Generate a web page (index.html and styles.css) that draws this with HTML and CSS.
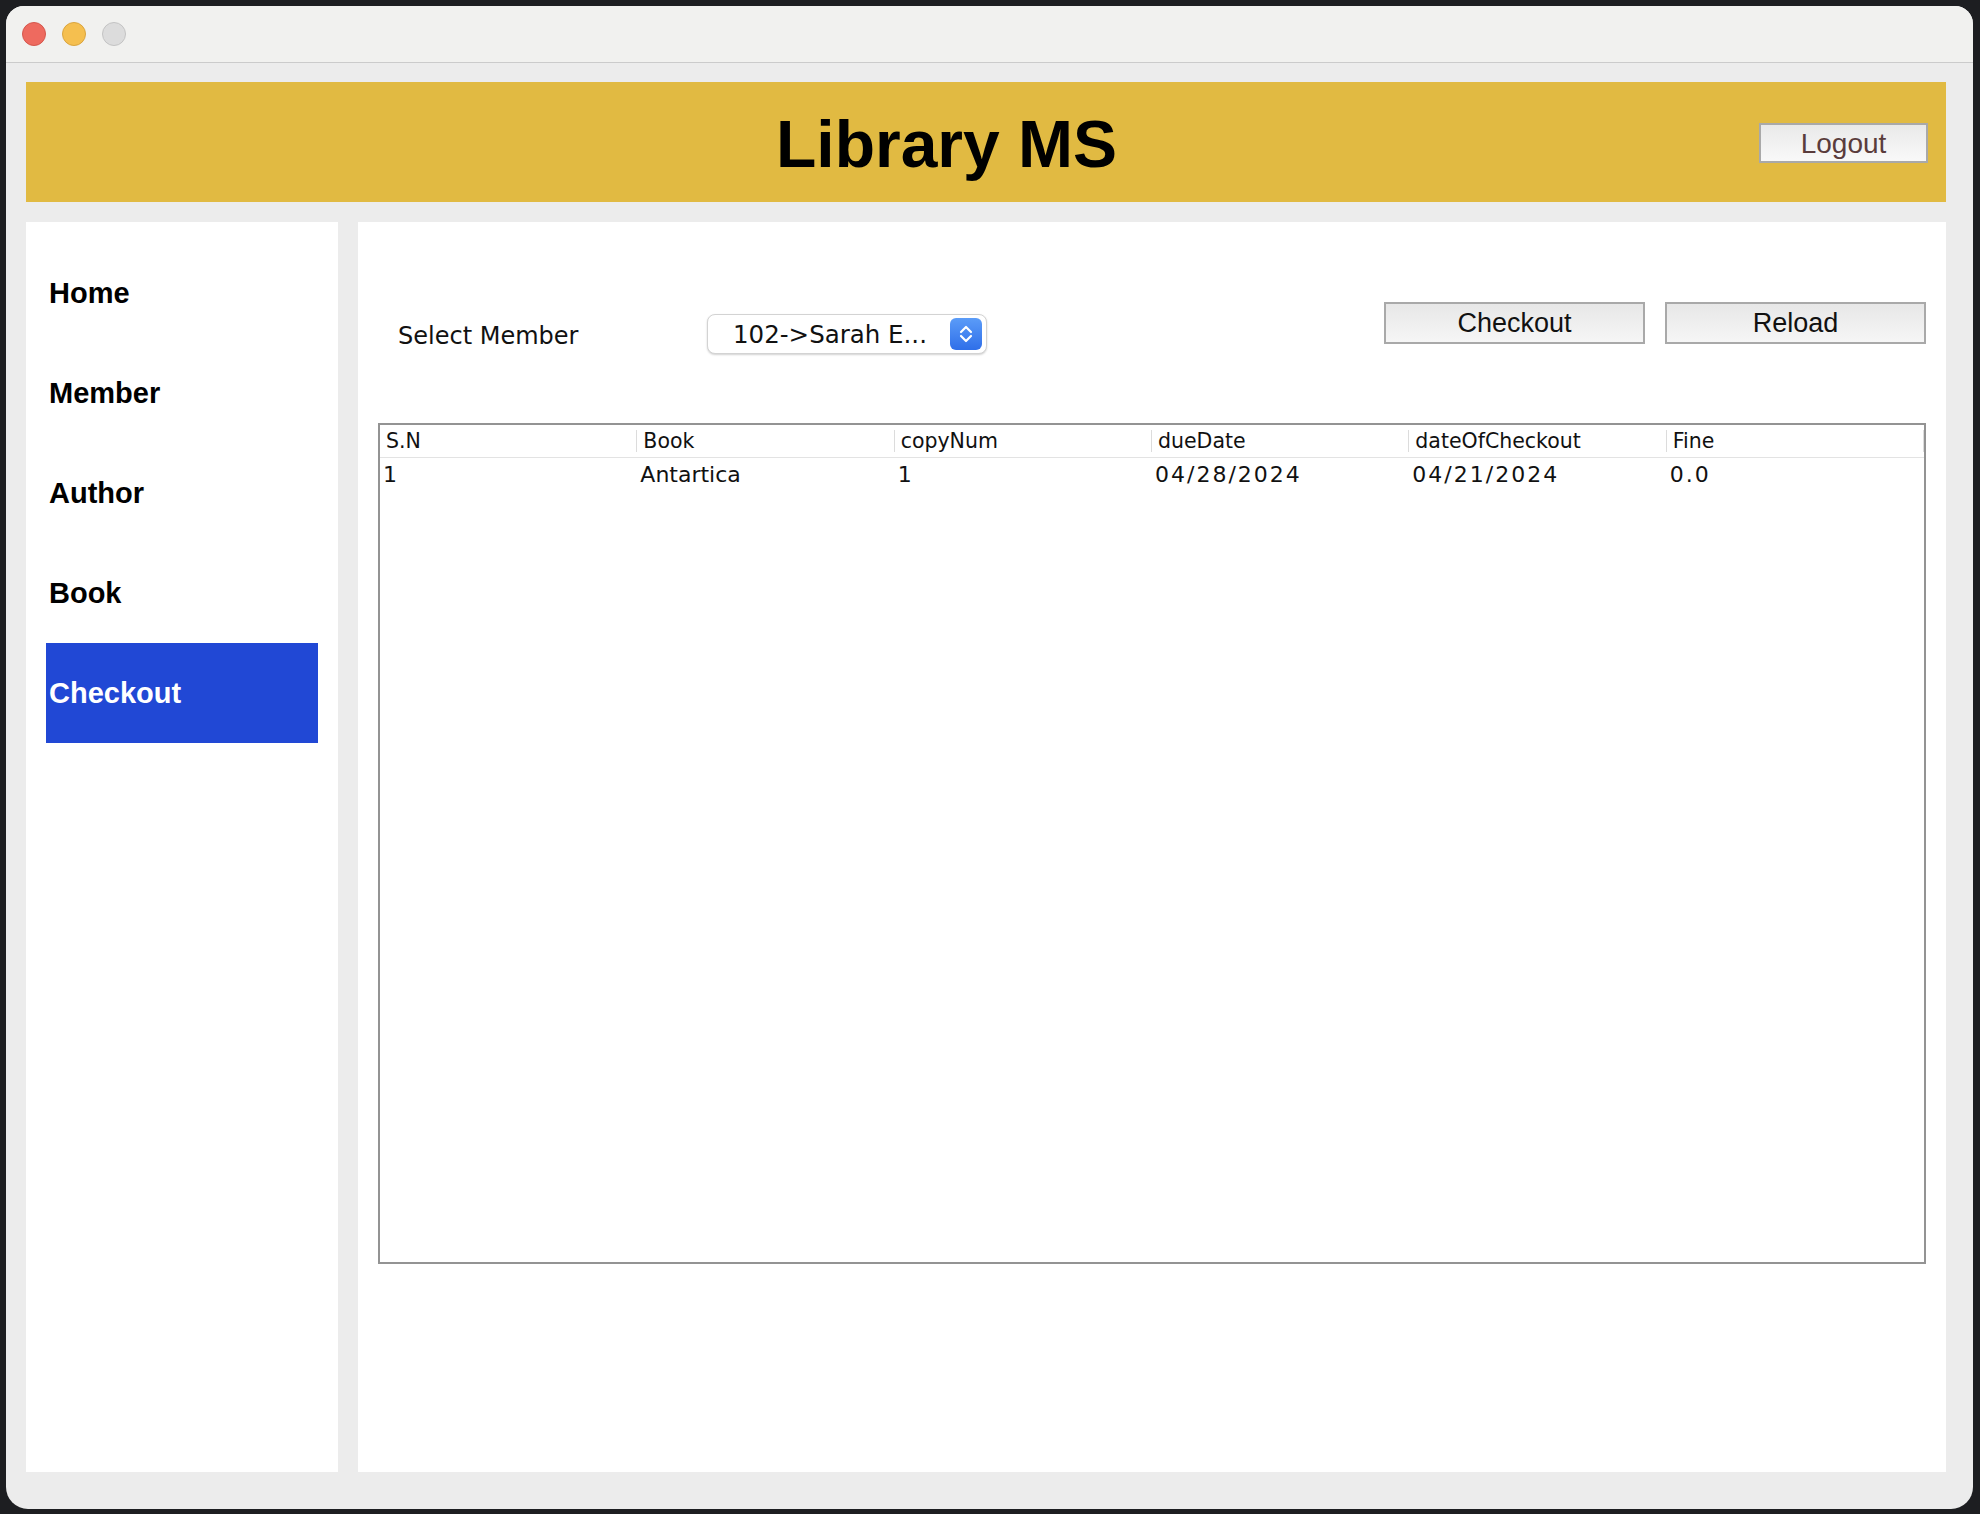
FILE: index.html
```html
<!DOCTYPE html>
<html lang="en">
<head>
<meta charset="utf-8">
<title>Library MS</title>
<link rel="stylesheet" href="styles.css">
</head>
<body>
<div class="window">
  <div class="titlebar">
    <span class="light red"></span>
    <span class="light yellow"></span>
    <span class="light gray"></span>
  </div>
  <div class="content">
    <header class="banner">
      <h1 class="title">Library MS</h1>
      <button class="btn logout">Logout</button>
    </header>
    <div class="body">
      <nav class="sidebar">
        <div class="nav-item">Home</div>
        <div class="nav-item">Member</div>
        <div class="nav-item">Author</div>
        <div class="nav-item">Book</div>
        <div class="nav-item active">Checkout</div>
      </nav>
      <main class="main">
        <div class="toolbar">
          <label class="member-label">Select Member</label>
          <div class="select">
            <span class="select-text">102-&gt;Sarah E...</span>
            <span class="stepper">
              <svg width="32" height="32" viewBox="0 0 32 32">
                <defs>
                  <linearGradient id="sg" x1="0" y1="0" x2="0" y2="1">
                    <stop offset="0" stop-color="#5b9cf8"/>
                    <stop offset="1" stop-color="#2f6fe9"/>
                  </linearGradient>
                </defs>
                <rect x="0" y="0" width="32" height="32" rx="6" fill="url(#sg)"/>
                <path d="M11 14 L16 9 L21 14" fill="none" stroke="#fff" stroke-width="2.2" stroke-linecap="round" stroke-linejoin="round"/>
                <path d="M11 18 L16 23 L21 18" fill="none" stroke="#fff" stroke-width="2.2" stroke-linecap="round" stroke-linejoin="round"/>
              </svg>
            </span>
          </div>
          <div class="spacer"></div>
          <button class="btn action">Checkout</button>
          <button class="btn action">Reload</button>
        </div>
        <div class="table">
          <div class="thead">
            <div class="th">S.N</div>
            <div class="th">Book</div>
            <div class="th">copyNum</div>
            <div class="th">dueDate</div>
            <div class="th">dateOfCheckout</div>
            <div class="th">Fine</div>
          </div>
          <div class="tr">
            <div class="td">1</div>
            <div class="td">Antartica</div>
            <div class="td">1</div>
            <div class="td num">04/28/2024</div>
            <div class="td num">04/21/2024</div>
            <div class="td num">0.0</div>
          </div>
        </div>
      </main>
    </div>
  </div>
</div>
</body>
</html>
```

FILE: styles.css
```css
html, body {
  margin: 0;
  padding: 0;
}

body {
  background: #1d1e21;
  width: 1980px;
  height: 1514px;
  overflow: hidden;
}

.window {
  margin: 6px 7px 0 6px;
  width: 1967px;
  height: 1503px;
  background: #ececec;
  border-radius: 18px 18px 22px 22px;
  overflow: hidden;
  display: flex;
  flex-direction: column;
}

.titlebar {
  height: 56px;
  flex: none;
  background: #f1f1ef;
  border-bottom: 1px solid #cbcbcb;
  display: flex;
  align-items: center;
  gap: 16px;
  padding-left: 16px;
}

.light {
  width: 22px;
  height: 22px;
  border-radius: 50%;
  border: 1px solid transparent;
}

.light.red {
  background: #ee6a5f;
  border-color: #d4574d;
}

.light.yellow {
  background: #f5bf4f;
  border-color: #d9a43f;
}

.light.gray {
  background: #dcdcdc;
  border-color: #c3c3c3;
}

.content {
  flex: 1;
  padding: 19px 27px 37px 20px;
  display: flex;
  flex-direction: column;
  gap: 20px;
}

.banner {
  height: 120px;
  flex: none;
  background: #e1ba42;
  display: flex;
  align-items: flex-start;
}

.title {
  margin: 29px 0 0 750px;
  font-family: "Liberation Sans", Arial, sans-serif;
  font-weight: bold;
  font-size: 66px;
  line-height: 66px;
  color: #000;
}

.btn {
  font-family: "Liberation Sans", Arial, sans-serif;
  border: 2px solid #a9a9a9;
  background: linear-gradient(#e7e7e7, #f6f6f6);
  color: #111;
  padding: 0;
  margin: 0;
  box-sizing: border-box;
}

.logout {
  margin: 41px 18px 0 auto;
  width: 169px;
  height: 40px;
  padding-top: 2px;
  font-size: 28px;
  color: #5a3c3c;
  background: linear-gradient(#e9e9e9, #f9f9f9);
}

.body {
  flex: 1;
  display: flex;
  gap: 20px;
}

.sidebar {
  width: 312px;
  flex: none;
  background: #fff;
  padding: 21px 20px 0 20px;
  box-sizing: border-box;
}

.nav-item {
  height: 100px;
  display: flex;
  align-items: center;
  padding-left: 3px;
  font-family: "Liberation Sans", Arial, sans-serif;
  font-weight: bold;
  font-size: 29px;
  color: #000;
}

.nav-item.active {
  background: #2148d5;
  color: #fff;
}

.main {
  flex: 1;
  background: #fff;
  padding: 0 20px;
  display: flex;
  flex-direction: column;
}

.toolbar {
  height: 201px;
  flex: none;
  display: flex;
  align-items: flex-start;
}

.member-label {
  flex: none;
  margin: 94px 0 0 20px;
  width: 309px;
  height: 40px;
  line-height: 40px;
  font-family: "DejaVu Sans", Verdana, sans-serif;
  font-size: 24px;
  color: #111;
}

.select {
  flex: none;
  margin-top: 92px;
  width: 280px;
  height: 40px;
  box-sizing: border-box;
  border: 1px solid #d3d3d3;
  border-radius: 8px;
  background: #fff;
  box-shadow: 0 1px 2px rgba(0, 0, 0, 0.18);
  display: flex;
  align-items: center;
  padding: 0 4px 0 25px;
}

.select-text {
  font-family: "DejaVu Sans", Verdana, sans-serif;
  font-size: 24.5px;
  color: #111;
  white-space: nowrap;
}

.stepper {
  margin-left: auto;
  width: 32px;
  height: 32px;
  display: flex;
}

.spacer {
  flex: 1;
}

.action {
  flex: none;
  margin-top: 80px;
  width: 261px;
  height: 42px;
  font-size: 27px;
}

.action + .action {
  margin-left: 20px;
}

.table {
  height: 841px;
  flex: none;
  box-sizing: border-box;
  border: 2px solid #939393;
  background: #fff;
}

.thead,
.tr {
  display: grid;
  grid-template-columns: repeat(6, 1fr);
}

.thead {
  height: 32px;
  border-bottom: 1px solid #e3e3e3;
}

.th {
  position: relative;
  padding-left: 6px;
  line-height: 32px;
  font-family: "DejaVu Sans", Verdana, sans-serif;
  font-size: 20.5px;
  color: #111;
  white-space: nowrap;
}

.th::after {
  content: "";
  position: absolute;
  right: 0;
  top: 5px;
  bottom: 5px;
  width: 1px;
  background: #dcdcdc;
}

.td {
  padding-left: 3px;
  line-height: 34px;
  font-family: "DejaVu Sans", Verdana, sans-serif;
  font-size: 22px;
  color: #111;
  white-space: nowrap;
}

.td.num {
  letter-spacing: 2px;
}
```
